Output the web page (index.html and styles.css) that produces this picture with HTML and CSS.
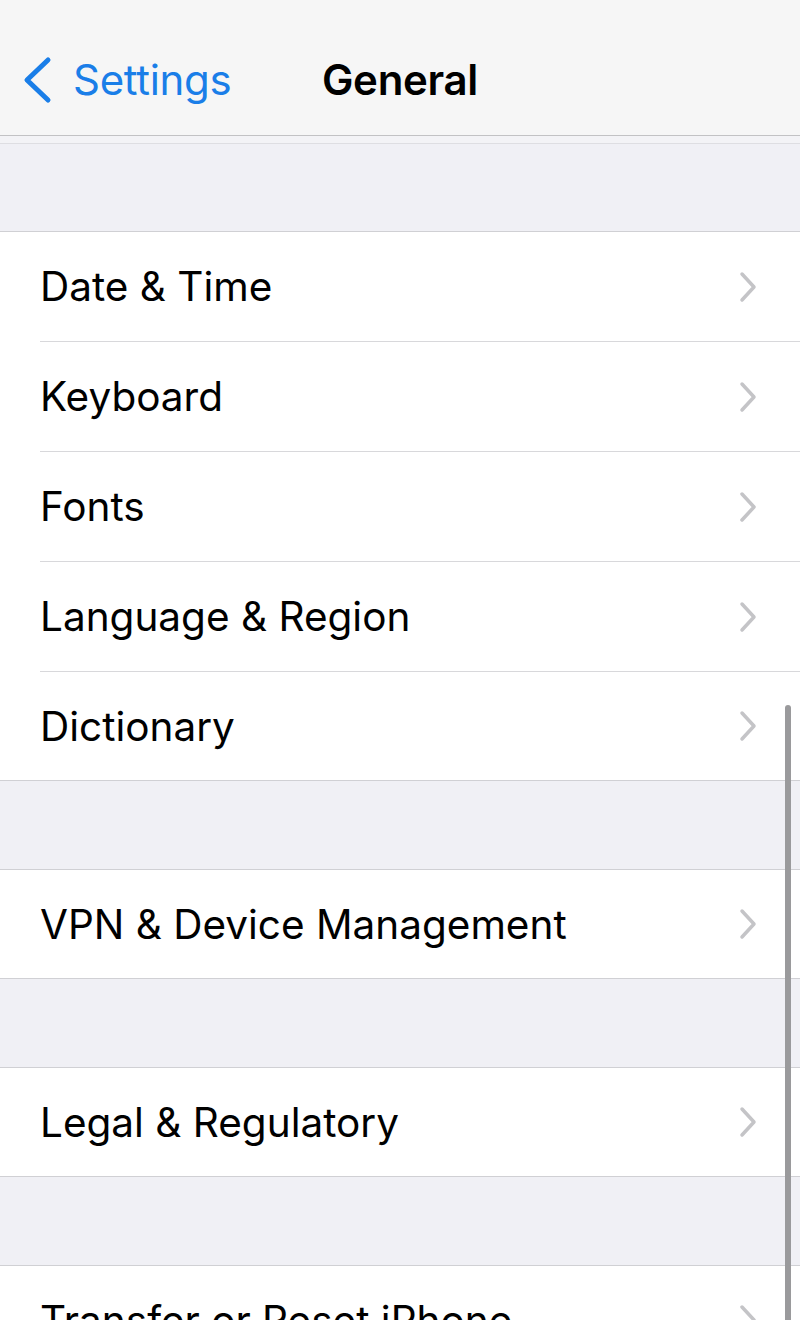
FILE: index.html
```html
<!DOCTYPE html>
<html lang="en">
<head>
    <meta charset="UTF-8">
    <meta name="viewport" content="width=device-width, initial-scale=1.0">
    <title>General</title>
    <link rel="stylesheet" href="styles.css">
</head>
<body>
    <div class="screen">
        <header class="navbar">
            <a class="back" href="#">
                <svg class="back-icon" width="32" height="48" viewBox="0 0 32 48">
                    <path d="M27 4 L6 24 L27 44" fill="none" stroke="#1a7ee8" stroke-width="5" stroke-linecap="round" stroke-linejoin="round"/>
                </svg>
                <span>Settings</span>
            </a>
            <h1 class="title">General</h1>
        </header>

        <div class="gap gap-top"></div>

        <ul class="group">
            <li class="row"><span class="label">Date &amp; Time</span><svg class="chevron" width="20" height="32" viewBox="0 0 20 32"><path d="M4 3 L16 16 L4 29" fill="none" stroke="#c4c4c7" stroke-width="3.5" stroke-linecap="round" stroke-linejoin="round"/></svg></li>
            <li class="row"><span class="label">Keyboard</span><svg class="chevron" width="20" height="32" viewBox="0 0 20 32"><path d="M4 3 L16 16 L4 29" fill="none" stroke="#c4c4c7" stroke-width="3.5" stroke-linecap="round" stroke-linejoin="round"/></svg></li>
            <li class="row"><span class="label">Fonts</span><svg class="chevron" width="20" height="32" viewBox="0 0 20 32"><path d="M4 3 L16 16 L4 29" fill="none" stroke="#c4c4c7" stroke-width="3.5" stroke-linecap="round" stroke-linejoin="round"/></svg></li>
            <li class="row"><span class="label">Language &amp; Region</span><svg class="chevron" width="20" height="32" viewBox="0 0 20 32"><path d="M4 3 L16 16 L4 29" fill="none" stroke="#c4c4c7" stroke-width="3.5" stroke-linecap="round" stroke-linejoin="round"/></svg></li>
            <li class="row"><span class="label">Dictionary</span><svg class="chevron" width="20" height="32" viewBox="0 0 20 32"><path d="M4 3 L16 16 L4 29" fill="none" stroke="#c4c4c7" stroke-width="3.5" stroke-linecap="round" stroke-linejoin="round"/></svg></li>
        </ul>

        <div class="gap"></div>

        <ul class="group">
            <li class="row"><span class="label">VPN &amp; Device Management</span><svg class="chevron" width="20" height="32" viewBox="0 0 20 32"><path d="M4 3 L16 16 L4 29" fill="none" stroke="#c4c4c7" stroke-width="3.5" stroke-linecap="round" stroke-linejoin="round"/></svg></li>
        </ul>

        <div class="gap"></div>

        <ul class="group">
            <li class="row"><span class="label">Legal &amp; Regulatory</span><svg class="chevron" width="20" height="32" viewBox="0 0 20 32"><path d="M4 3 L16 16 L4 29" fill="none" stroke="#c4c4c7" stroke-width="3.5" stroke-linecap="round" stroke-linejoin="round"/></svg></li>
        </ul>

        <div class="gap"></div>

        <ul class="group">
            <li class="row"><span class="label">Transfer or Reset iPhone</span><svg class="chevron" width="20" height="32" viewBox="0 0 20 32"><path d="M4 3 L16 16 L4 29" fill="none" stroke="#c4c4c7" stroke-width="3.5" stroke-linecap="round" stroke-linejoin="round"/></svg></li>
        </ul>

        <div class="scrollbar"></div>
    </div>
</body>
</html>
```

FILE: styles.css
```css
body {
    margin: 0;
    padding: 0;
    font-family: Inter, "Liberation Sans", sans-serif;
    background-color: #f0f0f5;
    color: #000;
}
.screen {
    position: relative;
    width: 800px;
    height: 1320px;
    overflow: hidden;
    background-color: #f0f0f5;
}
.navbar {
    box-sizing: border-box;
    height: 136px;
    padding-top: 24px;
    background-color: #f6f6f6;
    border-bottom: 1px solid #c2c2c4;
    display: flex;
    align-items: center;
    position: relative;
}
.back {
    display: flex;
    align-items: center;
    gap: 20px;
    padding-left: 21px;
    color: #1a7ee8;
    text-decoration: none;
    font-size: 42px;
    letter-spacing: -0.3px;
}
.back-icon {
    display: block;
}
.title {
    position: absolute;
    left: 0;
    right: 0;
    margin: 0;
    text-align: center;
    font-size: 42px;
    font-weight: 600;
    letter-spacing: -0.3px;
}
.gap {
    height: 88px;
}
.gap-top {
    height: 88px;
    border-top: 7px solid #f3f3f6;
    box-shadow: inset 0 1px 0 #dedee2;
}
.group {
    list-style: none;
    margin: 0;
    padding: 0;
    background: #fff;
    border-top: 1px solid #d0d0d4;
    border-bottom: 1px solid #d0d0d4;
}
.row {
    height: 109px;
    margin-left: 40px;
    padding-right: 42px;
    display: flex;
    align-items: center;
    justify-content: space-between;
    border-bottom: 1px solid #d8d8db;
}
.row:last-child {
    height: 108px;
    border-bottom: none;
}
.label {
    font-size: 40.5px;
    letter-spacing: 0;
}
.chevron {
    display: block;
}
.scrollbar {
    position: absolute;
    left: 785px;
    top: 705px;
    width: 6px;
    height: 640px;
    border-radius: 3px;
    background-color: #9a9a9c;
}
```
